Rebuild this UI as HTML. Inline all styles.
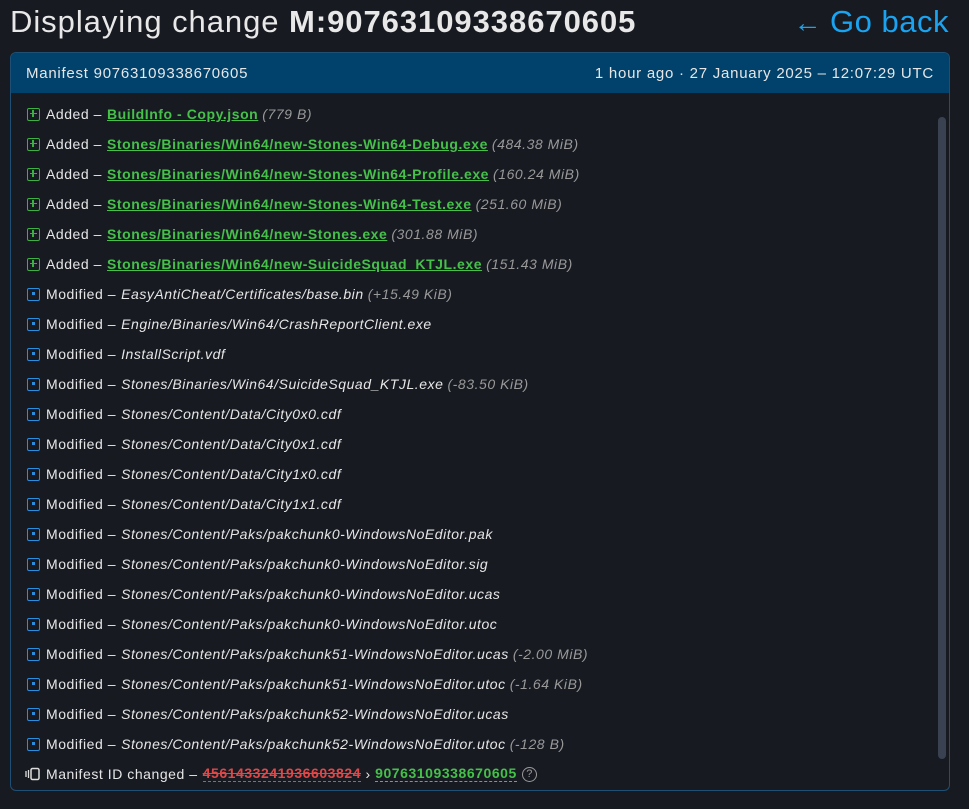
<!DOCTYPE html>
<html><head><meta charset="utf-8"><style>
body{margin:0;background:#171a21;color:#e6e6e6;font-family:"Liberation Sans",sans-serif;width:969px;height:809px;overflow:hidden;position:relative}
h1{position:absolute;left:10px;top:2px;margin:0;font-size:31px;font-weight:normal;color:#e8e8e8;line-height:40px;letter-spacing:0.95px}
h1 b{font-weight:bold}
.back{position:absolute;right:20px;top:2px;font-size:31px;color:#1aa3f0;line-height:40px;letter-spacing:0.5px}
.back span{font-size:28px;margin-right:8px}
.panel{position:absolute;left:10px;top:52px;width:938px;height:737px;border:1px solid #1f4f74;border-radius:6px;overflow:hidden}
.hd{height:40px;background:#00426b;display:flex;justify-content:space-between;align-items:center;padding:0 15px;font-size:15px;color:#e6e6e6;letter-spacing:0.75px}
.rows{padding-top:6px}
.r{height:30px;line-height:30px;font-size:14px;padding-left:16px;white-space:nowrap;display:flex;align-items:center;letter-spacing:0.55px}
.ia{width:13px;height:13px;border:1.5px solid #3cb043;border-radius:2px;margin-right:6px;position:relative;box-sizing:border-box;flex:none}
.ia:before{content:"";position:absolute;left:1.5px;top:4.25px;width:7px;height:1.5px;background:#3cb043}
.ia:after{content:"";position:absolute;left:4.25px;top:1.5px;width:1.5px;height:7px;background:#3cb043}
.im{width:13px;height:13px;border:1.5px solid #2a8ee0;border-radius:2px;margin-right:6px;position:relative;box-sizing:border-box;flex:none}
.im:after{content:"";position:absolute;left:3.5px;top:3.5px;width:3px;height:3px;background:#2a8ee0}
.g{color:#45c14a;font-weight:bold;text-decoration:underline;margin-left:5px}
i{margin-left:5px}
.s{color:#999;margin-left:4px;font-style:italic}
.sb{position:absolute;right:3px;top:64px;width:8px;height:642px;background:#3a4252;border-radius:4px}
.old{color:#e04848;font-weight:bold;text-decoration:line-through;border-bottom:1px dashed #e04848;margin-left:5px;line-height:15px}
.new{color:#45c14a;font-weight:bold;border-bottom:1px dashed #45c14a;line-height:15px}
</style></head><body>
<h1>Displaying change <b>M:90763109338670605</b></h1>
<div class="back"><span>←</span>Go back</div>
<div class="panel">
<div class="hd"><span>Manifest 90763109338670605</span><span>1 hour ago · 27 January 2025 – 12:07:29 UTC</span></div>
<div class="sb"></div>
<div class="rows">
<div class="r"><span class="ia"></span>Added –<span class="g">BuildInfo - Copy.json</span><span class="s">(779 B)</span></div>
<div class="r"><span class="ia"></span>Added –<span class="g">Stones/Binaries/Win64/new-Stones-Win64-Debug.exe</span><span class="s">(484.38 MiB)</span></div>
<div class="r"><span class="ia"></span>Added –<span class="g">Stones/Binaries/Win64/new-Stones-Win64-Profile.exe</span><span class="s">(160.24 MiB)</span></div>
<div class="r"><span class="ia"></span>Added –<span class="g">Stones/Binaries/Win64/new-Stones-Win64-Test.exe</span><span class="s">(251.60 MiB)</span></div>
<div class="r"><span class="ia"></span>Added –<span class="g">Stones/Binaries/Win64/new-Stones.exe</span><span class="s">(301.88 MiB)</span></div>
<div class="r"><span class="ia"></span>Added –<span class="g">Stones/Binaries/Win64/new-SuicideSquad_KTJL.exe</span><span class="s">(151.43 MiB)</span></div>
<div class="r"><span class="im"></span>Modified –<i>EasyAntiCheat/Certificates/base.bin</i><span class="s">(+15.49 KiB)</span></div>
<div class="r"><span class="im"></span>Modified –<i>Engine/Binaries/Win64/CrashReportClient.exe</i></div>
<div class="r"><span class="im"></span>Modified –<i>InstallScript.vdf</i></div>
<div class="r"><span class="im"></span>Modified –<i>Stones/Binaries/Win64/SuicideSquad_KTJL.exe</i><span class="s">(-83.50 KiB)</span></div>
<div class="r"><span class="im"></span>Modified –<i>Stones/Content/Data/City0x0.cdf</i></div>
<div class="r"><span class="im"></span>Modified –<i>Stones/Content/Data/City0x1.cdf</i></div>
<div class="r"><span class="im"></span>Modified –<i>Stones/Content/Data/City1x0.cdf</i></div>
<div class="r"><span class="im"></span>Modified –<i>Stones/Content/Data/City1x1.cdf</i></div>
<div class="r"><span class="im"></span>Modified –<i>Stones/Content/Paks/pakchunk0-WindowsNoEditor.pak</i></div>
<div class="r"><span class="im"></span>Modified –<i>Stones/Content/Paks/pakchunk0-WindowsNoEditor.sig</i></div>
<div class="r"><span class="im"></span>Modified –<i>Stones/Content/Paks/pakchunk0-WindowsNoEditor.ucas</i></div>
<div class="r"><span class="im"></span>Modified –<i>Stones/Content/Paks/pakchunk0-WindowsNoEditor.utoc</i></div>
<div class="r"><span class="im"></span>Modified –<i>Stones/Content/Paks/pakchunk51-WindowsNoEditor.ucas</i><span class="s">(-2.00 MiB)</span></div>
<div class="r"><span class="im"></span>Modified –<i>Stones/Content/Paks/pakchunk51-WindowsNoEditor.utoc</i><span class="s">(-1.64 KiB)</span></div>
<div class="r"><span class="im"></span>Modified –<i>Stones/Content/Paks/pakchunk52-WindowsNoEditor.ucas</i></div>
<div class="r"><span class="im"></span>Modified –<i>Stones/Content/Paks/pakchunk52-WindowsNoEditor.utoc</i><span class="s">(-128 B)</span></div>
<div class="r" style="padding-left:14px"><svg width="16" height="14" viewBox="0 0 16 14" style="margin-right:5px"><path d="M1 4v6M3.5 3v8" stroke="#ddd" stroke-width="1.3"/><rect x="6" y="1.5" width="8" height="11" rx="1.5" fill="none" stroke="#ddd" stroke-width="1.5"/></svg>Manifest ID changed –<span class="old">4561433241936603824</span>&nbsp;›&nbsp;<span class="new">90763109338670605</span><span style="margin-left:5px;display:inline-block;width:15px;height:15px;border:1.5px solid #999;border-radius:50%;font-size:11px;line-height:12px;text-align:center;color:#999;box-sizing:border-box;letter-spacing:0">?</span></div>
</div></div>
</body></html>
